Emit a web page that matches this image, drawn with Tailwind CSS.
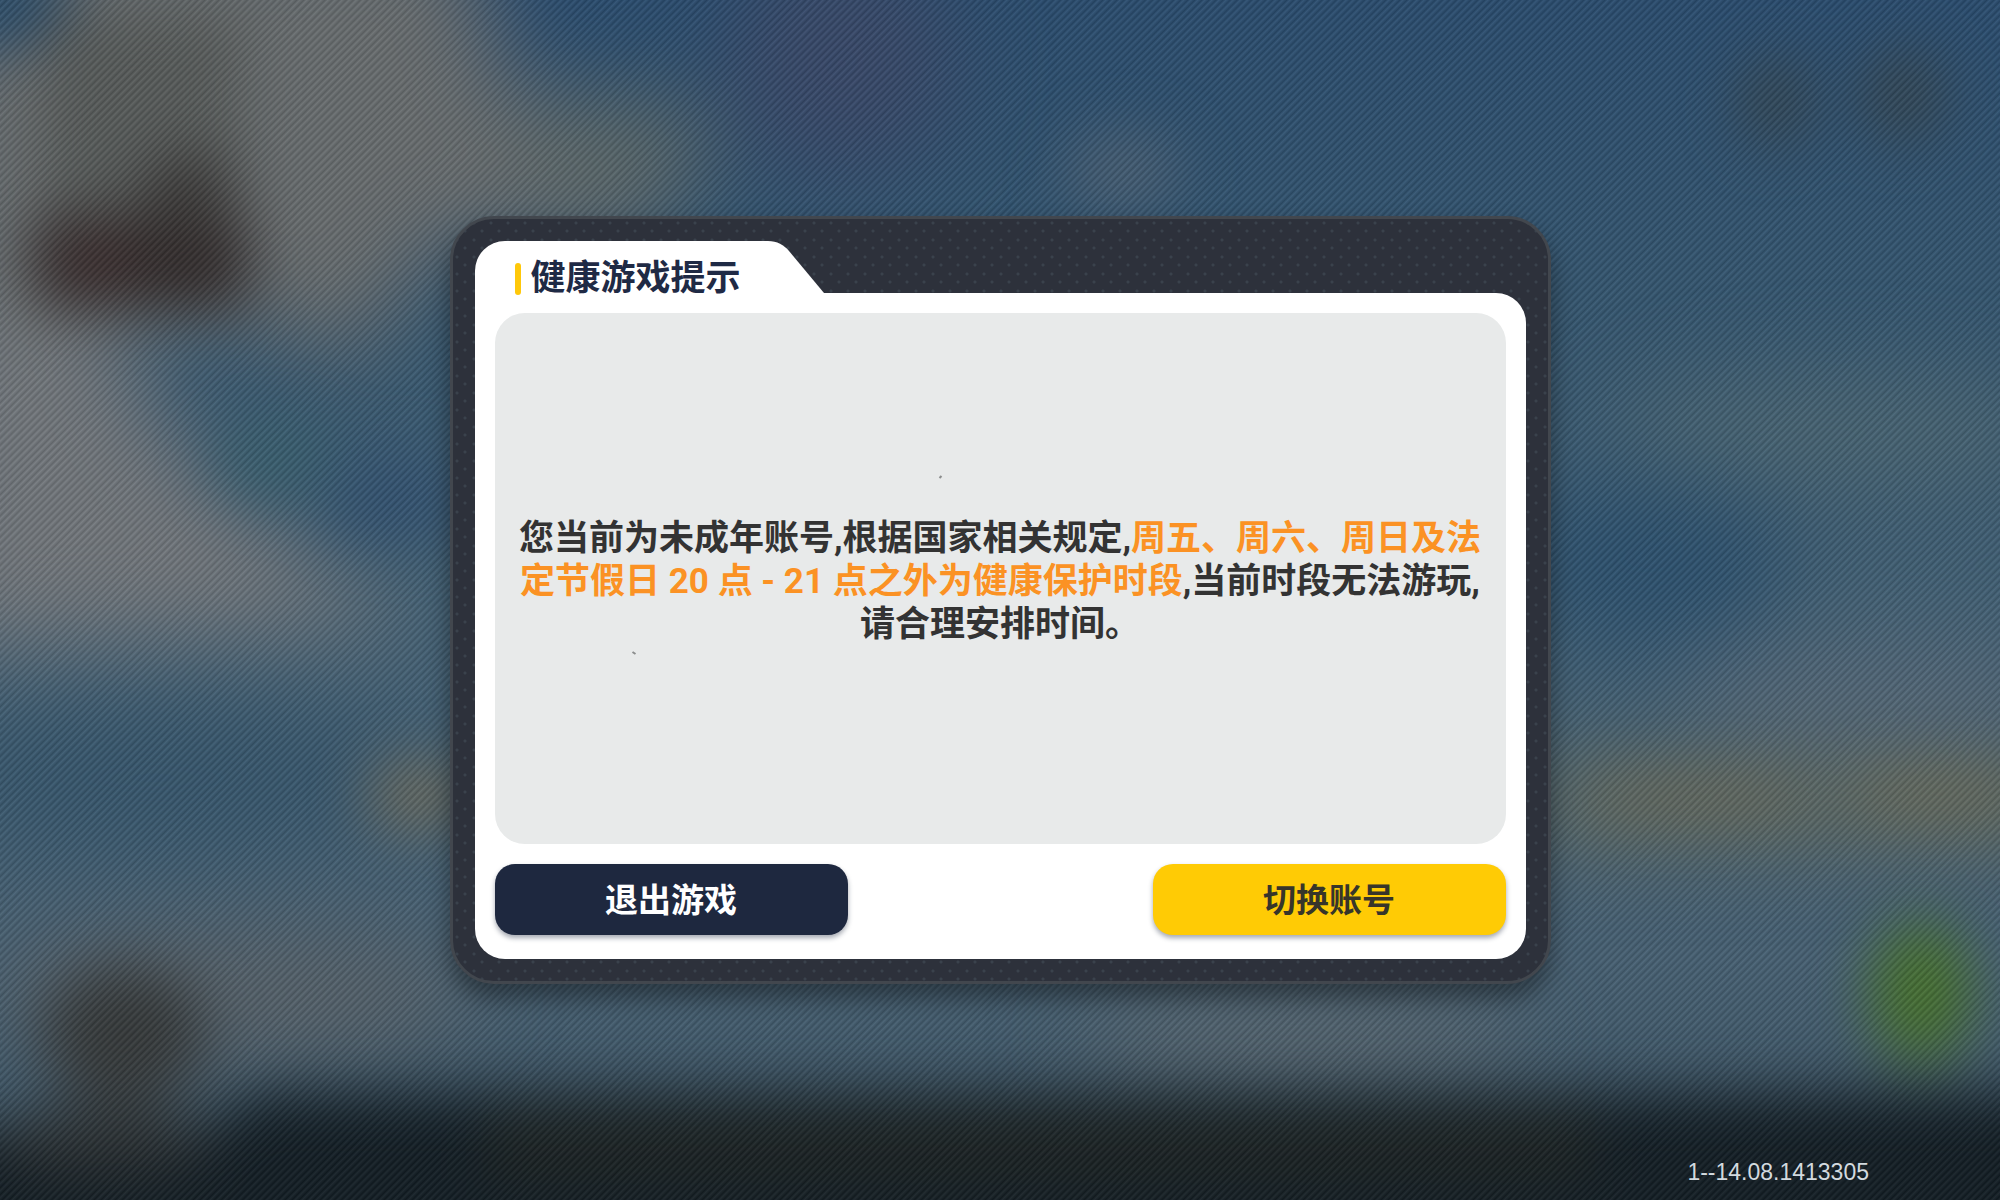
<!DOCTYPE html>
<html lang="zh-CN">
  <head>
    <meta charset="UTF-8" />
    <meta name="viewport" content="width=device-width, initial-scale=1.0" />
    <title>健康游戏提示</title>
    <script src="https://cdn.jsdelivr.net/npm/@tailwindcss/browser@4"></script>
  </head>
  <body
    class="relative flex min-h-screen items-center justify-center overflow-hidden bg-[#2f5370] font-['Roboto','Noto_Sans_CJK_SC',sans-serif]"
  >
    <!-- blurred game scene -->
    <svg
      class="absolute inset-0 h-full w-full"
      viewBox="0 0 1568 941"
      preserveAspectRatio="none"
      aria-hidden="true"
    >
      <defs>
        <linearGradient id="sky" x1="0" y1="0" x2="0" y2="1">
          <stop offset="0" stop-color="#2a4d70" />
          <stop offset="0.25" stop-color="#355771" />
          <stop offset="0.5" stop-color="#426176" />
          <stop offset="0.8" stop-color="#476174" />
          <stop offset="1" stop-color="#3a5262" />
        </linearGradient>
        <filter id="soft" x="-50%" y="-50%" width="200%" height="200%" color-interpolation-filters="sRGB">
          <feGaussianBlur stdDeviation="22" />
        </filter>
        <filter id="wide" x="-50%" y="-50%" width="200%" height="200%" color-interpolation-filters="sRGB">
          <feGaussianBlur stdDeviation="34" />
        </filter>
      </defs>
      <rect width="1568" height="941" fill="url(#sky)" />
      <g filter="url(#wide)">
        <path d="M60 -60H360L400 70L540 90L510 190L350 190L280 280L180 250L-60 270V60Z" fill="#696e70" />
        <ellipse cx="480" cy="120" rx="80" ry="45" fill="#5b6869" />
        <ellipse cx="660" cy="50" rx="90" ry="90" fill="#38496a" />
        <path d="M-60 240L80 250L140 350L230 430L330 490L180 500L-60 510Z" fill="#73787d" />
        <ellipse cx="120" cy="610" rx="190" ry="60" fill="#37576e" />
        <ellipse cx="180" cy="780" rx="190" ry="50" fill="#57626a" />
        <ellipse cx="1290" cy="440" rx="110" ry="70" fill="#2d5270" />
        <ellipse cx="1440" cy="340" rx="180" ry="40" fill="#4a6674" />
        <ellipse cx="1470" cy="545" rx="160" ry="36" fill="#566979" />
        <ellipse cx="1020" cy="815" rx="180" ry="25" fill="#5f6a71" />
        <rect x="1200" y="600" width="440" height="60" fill="#646c60" />
      </g>
      <g filter="url(#soft)">
        <ellipse cx="10" cy="5" rx="50" ry="30" fill="#284c6b" />
        <rect x="32" y="10" width="156" height="160" fill="#585c5b" />
        <rect x="25" y="170" width="170" height="72" rx="20" fill="#312a2a" />
        <ellipse cx="148" cy="155" rx="38" ry="34" fill="#3b3938" />
        <ellipse cx="75" cy="205" rx="28" ry="18" fill="#443132" />
        <ellipse cx="215" cy="360" rx="46" ry="30" fill="#385f6f" />
        <ellipse cx="310" cy="390" rx="55" ry="36" fill="#335372" />
        <ellipse cx="880" cy="135" rx="46" ry="30" fill="#485f74" />
        <ellipse cx="1392" cy="80" rx="28" ry="34" fill="#334653" />
        <ellipse cx="1492" cy="75" rx="32" ry="36" fill="#334653" />
        <ellipse cx="328" cy="624" rx="40" ry="26" fill="#6b6b5e" />
        <ellipse cx="1330" cy="625" rx="90" ry="14" fill="#68695b" />
        <ellipse cx="1520" cy="622" rx="70" ry="16" fill="#6a6b5a" />
        <ellipse cx="97" cy="812" rx="64" ry="54" fill="#363a3b" />
        <path d="M-60 885H160L200 858H1640V1020H-60Z" fill="#121d24" />
        <path d="M380 870H1250V925H380Z" fill="#1c2323" />
        <ellipse cx="80" cy="895" rx="90" ry="26" fill="#2b3032" />
        <ellipse cx="1506" cy="778" rx="40" ry="56" fill="#46712f" />
      </g>
    </svg>
    <div
      class="absolute inset-0 bg-[repeating-linear-gradient(135deg,rgba(0,0,0,0.15)_0px,rgba(255,255,255,0.06)_2px,rgba(0,0,0,0.15)_5px)]"
    ></div>

    <main
      role="dialog"
      aria-labelledby="dialog-title"
      class="relative w-full max-w-[1101px] rounded-[44px] border-3 border-[#42474e] bg-[#2d313b] bg-[radial-gradient(circle_at_4px_4px,#3a424c_1px,transparent_2px),radial-gradient(circle_at_12px_12px,#3a424c_1px,transparent_2px)] bg-size-[17px_17px] p-[22px] shadow-[0_14px_24px_rgba(0,0,0,0.4)]"
    >
      <header class="relative z-10 flex h-[52px]">
        <div class="flex w-[293px] items-start gap-2.5 rounded-tl-[30px] bg-white pt-5 pl-10">
          <span class="mt-0.5 h-8 w-1.5 shrink-0 rounded-full bg-[#ffc80a]"></span>
          <h1 id="dialog-title" class="text-[35px] leading-9 font-bold whitespace-nowrap text-[#1f2a45]">
            健康游戏提示
          </h1>
        </div>
        <svg class="h-[52px] w-14" viewBox="0 0 56 52" fill="#fff" aria-hidden="true">
          <path d="M0 0C9 0 16 4 21 10L56 52H0Z" />
        </svg>
      </header>

      <div class="rounded-tr-[30px] rounded-b-[30px] bg-white px-5 pt-5 pb-6">
        <section
          class="relative flex min-h-[531px] items-center justify-center rounded-[30px] bg-[#e8eaea] px-5 pt-1.5 text-center"
        >
          <p class="text-[35px] leading-[43px] font-bold text-[#333]">
            您当前为未成年账号,根据国家相关规定,<span class="text-[#fb9224]">周五、周六、周日及法<br />定节假日 20 点 - 21 点之外为健康保护时段</span>,当前时段无法游玩,<br />请合理安排时间。
          </p>
          <svg
            class="absolute inset-0 h-full w-full"
            viewBox="0 0 1010 531"
            fill="none"
            stroke="#8b8d8d"
            stroke-width="2"
            aria-hidden="true"
          >
            <path d="M444 165l2-2M137 339l3 2" />
          </svg>
        </section>

        <div class="mt-5 flex justify-between text-[33px] font-bold">
          <button
            type="button"
            class="h-[71px] w-[353px] rounded-[20px] bg-[#1e283f] pt-0.5 text-white shadow-[0_3px_5px_rgba(30,40,63,0.4)]"
          >
            退出游戏
          </button>
          <button
            type="button"
            class="h-[71px] w-[353px] rounded-[20px] bg-[#ffcb05] pt-0.5 text-[#37352a] shadow-[0_3px_5px_rgba(30,40,63,0.4)]"
          >
            切换账号
          </button>
        </div>
      </div>
    </main>

    <p
      class="absolute right-[131px] bottom-4 font-['Liberation_Sans',sans-serif] text-[23px] leading-6 text-[#d3dadf]"
    >
      1--14.08.1413305
    </p>
  </body>
</html>
